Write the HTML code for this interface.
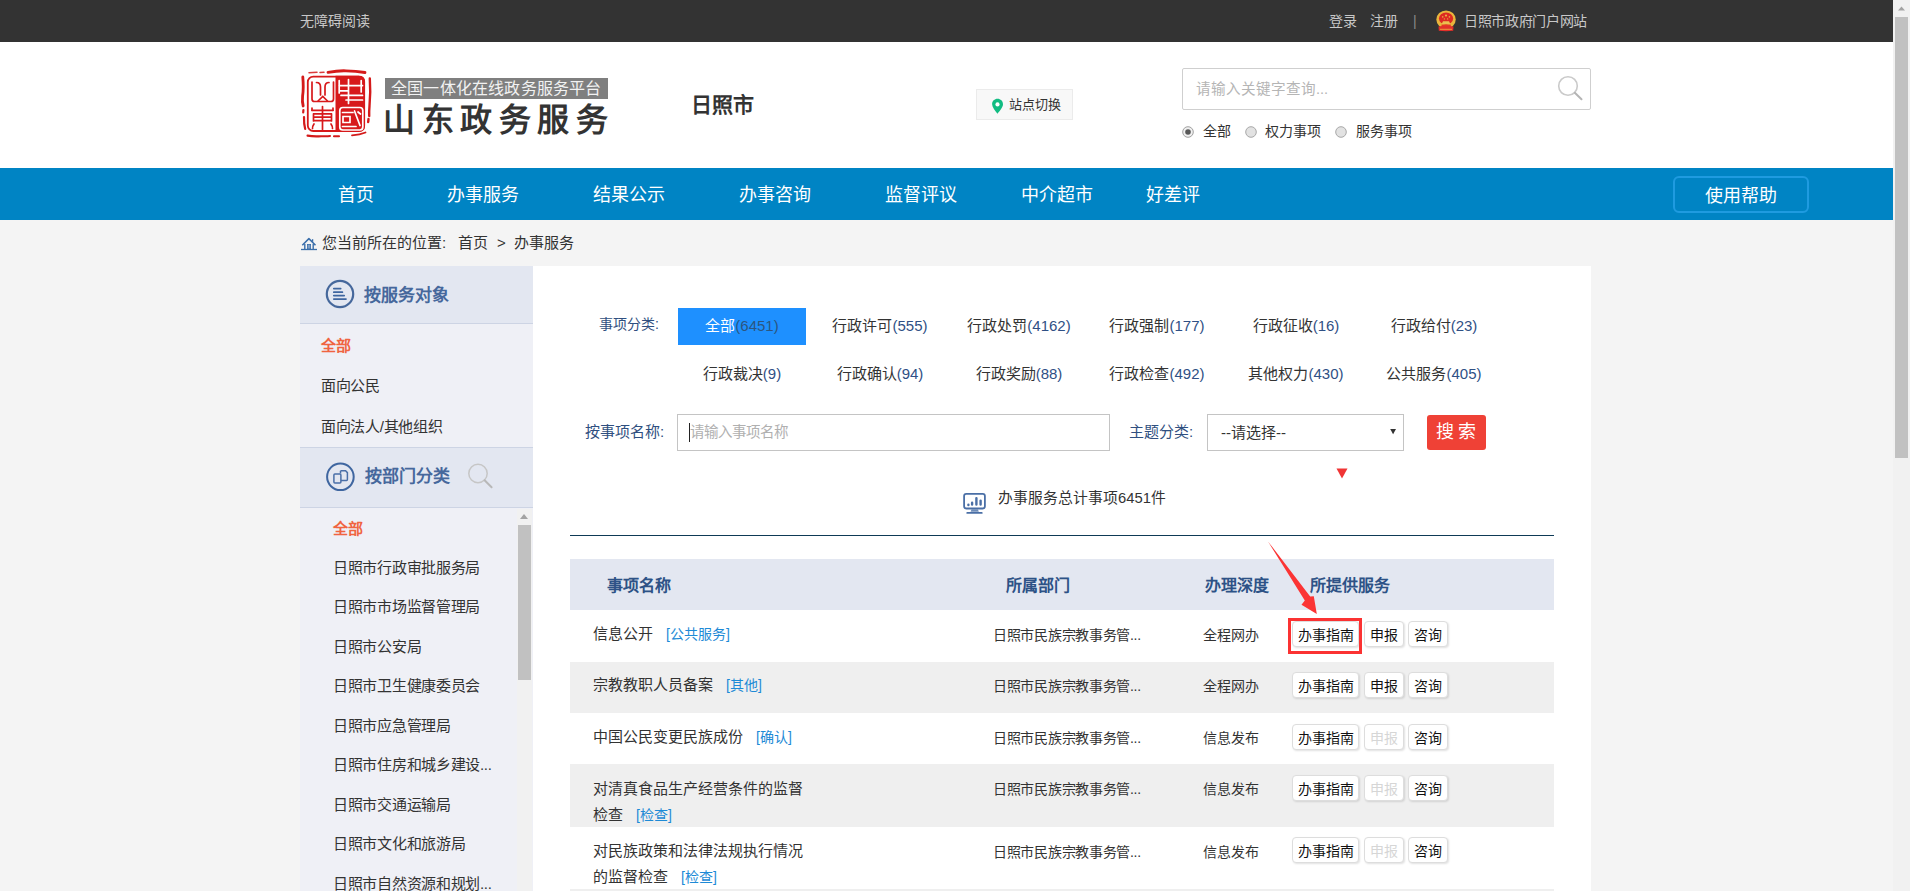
<!DOCTYPE html>
<html lang="zh-CN">
<head>
<meta charset="utf-8">
<title>山东政务服务</title>
<style>
*{margin:0;padding:0;box-sizing:border-box;}
html,body{width:1910px;height:891px;overflow:hidden;}
body{font-family:"Liberation Sans",sans-serif;background:#f4f4f4;position:relative;color:#333;}
.a{position:absolute;white-space:nowrap;}
#top{left:0;top:0;width:1893px;height:42px;background:#333;}
.tt{color:#c8c8c8;font-size:14px;line-height:16px;}
#hdr{left:0;top:42px;width:1893px;height:126px;background:#fff;}
#nav{left:0;top:168px;width:1893px;height:52px;background:#0084c4;}
.ni{color:#fff;font-size:18px;line-height:20px;top:185px;}
#help{left:1673px;top:176px;width:136px;height:37px;border:2px solid #1f9be0;border-radius:6px;color:#fff;font-size:18px;text-align:center;line-height:35px;}
#sb{left:1893px;top:0;width:17px;height:891px;background:#f1f1f1;}
#sbt{left:1895px;top:17px;width:13px;height:441px;background:#c1c1c1;}
#side{left:300px;top:266px;width:233px;height:625px;background:#eff0f6;}
.sh{left:300px;width:233px;background:#e3e7f1;border-bottom:1px solid #cdd4e4;}
.stitle{color:#46689c;font-size:17px;font-weight:bold;line-height:20px;}
.si{font-size:15px;color:#333;line-height:18px;letter-spacing:-0.3px;}
.sel{color:#f06440;font-weight:bold;}
#main{left:533px;top:266px;width:1058px;height:625px;background:#fff;}
.tab{font-size:15px;color:#333;line-height:18px;text-align:center;width:138px;}
.row{left:570px;width:984px;}
.btn{height:26px;border:1px solid #ddd;border-radius:4px;background:#fff;box-shadow:1px 1px 2px rgba(0,0,0,.12);font-size:14px;line-height:26px;text-align:center;color:#111;}
.dis{color:#d6d6d6 !important;}
.bc{top:234px;font-size:15px;line-height:18px;color:#333;}
.c{color:#2f5085;}
.nm{font-size:15px;color:#333;line-height:26px;white-space:normal;width:224px;}
.tag{color:#1d8ad6;font-size:14px;margin-left:13px;}
.dp{font-size:14px;color:#333;line-height:18px;}
.dq{letter-spacing:-0.3px;}
.th{font-size:16px;font-weight:bold;color:#2d5286;line-height:20px;top:576px !important;}
</style>
</head>
<body>
<!-- top bar -->
<div class="a" id="top"></div>
<div class="a tt" style="left:300px;top:13px;">无障碍阅读</div>
<div class="a tt" style="left:1329px;top:13px;">登录</div>
<div class="a tt" style="left:1370px;top:13px;">注册</div>
<div class="a tt" style="left:1413px;top:13px;color:#8a8a8a;">|</div>
<svg class="a" style="left:1432px;top:8px;" width="30" height="26" viewBox="0 0 30 26">
<ellipse cx="14.05" cy="11.6" rx="9.7" ry="9.2" fill="#e9b53c"/>
<ellipse cx="14.05" cy="10.6" rx="7.1" ry="6" fill="#dc2a22"/>
<circle cx="14" cy="7.6" r="1.1" fill="#eab040"/>
<circle cx="10.7" cy="8.9" r="0.8" fill="#e8a540"/><circle cx="17.4" cy="8.9" r="0.8" fill="#e8a540"/>
<circle cx="12.4" cy="10.9" r="0.7" fill="#e8a540"/><circle cx="15.6" cy="10.9" r="0.7" fill="#e8a540"/>
<path d="M11 13.2 H17 L18.3 16 H9.7z" fill="#eac050"/>
<path d="M9.5 16.6 H18.8 V18.8 H9.5z" fill="#e33a28"/>
<path d="M6.5 18.5 Q14 17 21.5 18.5 L21.2 22.8 Q14 23.5 6.8 22.8z" fill="#e2302a"/>
<path d="M8 21.3 H20" stroke="#eaa840" stroke-width="0.9"/>
</svg>
<div class="a tt" style="left:1464px;top:13px;letter-spacing:-0.35px;">日照市政府门户网站</div>

<!-- header -->
<div class="a" id="hdr"></div>
<svg class="a" style="left:298px;top:66px;" width="76" height="76" viewBox="0 0 76 76">
<g fill="none" stroke="#d41a1a" stroke-linecap="round">
<path d="M11 6.8 L19 6.3 M22 6.5 L26 6.2" stroke-width="1.5" opacity=".85"/>
<path d="M30 6.4 Q40 4.5 48 4.8 Q58 5 67 6.5" stroke-width="2.8"/>
<path d="M4.8 11 Q5.8 22 4.6 30 Q4 36 5.2 40" stroke-width="2.8"/>
<path d="M5.4 44 L5.2 46.5 M6 51 Q5.8 58 7.2 63" stroke-width="2.2"/>
<path d="M71.8 12.5 Q72.8 26 71.5 40 Q71 46 71.2 50 M70.5 53 L70.2 56" stroke-width="2.4"/>
<path d="M9.5 69.6 Q16 70.8 23 70.2 Q29 70.5 32 70 M36 70.2 L41 70.3" stroke-width="2.1"/>
<path d="M54 69.3 Q62 68.8 67.5 66.5" stroke-width="1.8"/>
</g>
<rect x="9.8" y="10.6" width="56.4" height="54.4" rx="5.5" fill="#fff" stroke="#d7191b" stroke-width="1.8"/>
<path d="M37.5 9.8 H61 Q67 9.8 67 15.5 V60 Q67 65.8 61 65.8 H37.5z" fill="#d7191b"/>
<g stroke="#d7191b" stroke-width="1.7" fill="none" stroke-linecap="round">
<path d="M14 16 V33 Q14 35.5 16.5 35.5 H33 Q35.5 35.5 35.5 33 V16"/>
<path d="M18.5 16.5 Q22.5 16.5 22.5 21 V29 M31 16.5 Q27 16.5 27 21 V29"/>
<path d="M20 35 L24.8 30.5 L29.5 35"/>
<path d="M14 44.3 H35 M16 47.8 H33 M16 51.2 H33 M16 54.6 H33 M24.5 40.5 V63.5 M15.5 47.8 V55 M33.5 47.8 V55"/>
<path d="M16 58 Q14 61 14.5 62.5 M33 58 Q35 61 34.5 62.5 M14 42 V44.3 M35 42 V44.3"/>
</g>
<g stroke="#fff" stroke-width="1.7" fill="none" stroke-linecap="round">
<path d="M41 19.6 H64.5 M43 29.4 H64.5 M48 34 H64.5 M50.5 13.5 V37.5 M41.2 14.5 V27 M63.2 14.5 V26 M41.2 24.8 H50"/>
<rect x="41.8" y="41.5" width="23" height="22.5" rx="3"/>
<path d="M44.5 46.5 H55 M45 50.5 H52 V56.5 H45z M56.5 45 L62 59.5 M44.5 60.5 H58 M60 46 L62.5 48"/>
</g>
</svg>
<div class="a" style="left:385px;top:78px;width:223px;height:21px;background:#7f7f7f;"></div>
<div class="a" style="left:391px;top:78px;font-size:16px;line-height:21px;color:#f2f2f2;letter-spacing:0.2px;">全国一体化在线政务服务平台</div>
<div class="a" style="left:383px;top:101px;font-size:32px;line-height:38px;color:#333;font-weight:bold;letter-spacing:6.5px;">山东政务服务</div>
<div class="a" style="left:691px;top:92px;font-size:21px;line-height:25px;color:#333;font-weight:bold;">日照市</div>
<div class="a" style="left:976px;top:89px;width:97px;height:31px;background:#f8f8f8;border:1px solid #ebebeb;"></div>
<svg class="a" style="left:992px;top:98px;" width="12" height="16" viewBox="0 0 12 16">
<path d="M5.5 0.7 C2.5 0.7 0.1 3 0.1 6.2 C0.1 9.3 3.2 12.6 5.5 15.7 C7.8 12.6 11 9.3 11 6.2 C11 3 8.5 0.7 5.5 0.7z" fill="#12bc82"/>
<circle cx="5.5" cy="6.4" r="2.1" fill="#fff"/>
</svg>
<div class="a" style="left:1009px;top:97px;font-size:13px;line-height:16px;color:#333;">站点切换</div>
<div class="a" style="left:1182px;top:68px;width:409px;height:42px;border:1px solid #cfcfcf;border-radius:2px;background:#fff;"></div>
<div class="a" style="left:1196px;top:80px;font-size:14.6px;line-height:18px;color:#b5b5b5;">请输入关键字查询...</div>
<svg class="a" style="left:1556px;top:75px;" width="28" height="27" viewBox="0 0 28 27">
<circle cx="12" cy="11" r="9.3" fill="none" stroke="#cacaca" stroke-width="1.6"/>
<path d="M18.8 17.8 L25.5 24.3" stroke="#b5b5b5" stroke-width="2" stroke-linecap="round"/>
</svg>
<!-- radios -->
<svg class="a" style="left:1182px;top:126px;" width="12" height="12" viewBox="0 0 12 12"><circle cx="6" cy="6" r="5.3" fill="#f0f0f0" stroke="#a0a0a0" stroke-width="1"/><circle cx="6" cy="6" r="2.8" fill="#585858"/></svg>
<div class="a" style="left:1203px;top:123px;font-size:14px;line-height:17px;color:#333;">全部</div>
<svg class="a" style="left:1245px;top:126px;" width="12" height="12" viewBox="0 0 12 12"><circle cx="6" cy="6" r="5.3" fill="#e2e2e2" stroke="#a8a8a8" stroke-width="1"/></svg>
<div class="a" style="left:1265px;top:123px;font-size:14px;line-height:17px;color:#333;">权力事项</div>
<svg class="a" style="left:1335px;top:126px;" width="12" height="12" viewBox="0 0 12 12"><circle cx="6" cy="6" r="5.3" fill="#e2e2e2" stroke="#a8a8a8" stroke-width="1"/></svg>
<div class="a" style="left:1356px;top:123px;font-size:14px;line-height:17px;color:#333;">服务事项</div>

<!-- nav -->
<div class="a" id="nav"></div>
<div class="a ni" style="left:338px;">首页</div>
<div class="a ni" style="left:447px;">办事服务</div>
<div class="a ni" style="left:593px;">结果公示</div>
<div class="a ni" style="left:739px;">办事咨询</div>
<div class="a ni" style="left:885px;">监督评议</div>
<div class="a ni" style="left:1021px;">中介超市</div>
<div class="a ni" style="left:1146px;">好差评</div>
<div class="a" id="help"></div><div class="a" style="left:1705px;top:186px;font-size:18px;line-height:20px;color:#fff;">使用帮助</div>

<!-- breadcrumb -->
<svg class="a" style="left:298px;top:232px;" width="24" height="22" viewBox="0 0 24 22">
<path d="M4.3 13.3 L10.9 6.6 L17.5 13.3" fill="none" stroke="#3a6eaa" stroke-width="1.5" stroke-linejoin="round"/>
<path d="M14.6 7.2 V9.8" stroke="#3a6eaa" stroke-width="1.3"/>
<path d="M6.8 12 V17.2 M15.2 12 V17.2" stroke="#3a6eaa" stroke-width="1.4"/>
<rect x="9.4" y="12.4" width="3.2" height="4.6" fill="#7f9fc6" stroke="#3a6eaa" stroke-width="0.8"/>
<path d="M3 17.5 H19" stroke="#3a6eaa" stroke-width="1.3"/>
</svg>
<div class="a bc" style="left:322px;">您当前所在的位置:</div><div class="a bc" style="left:458px;">首页</div><div class="a bc" style="left:497px;">&gt;</div><div class="a bc" style="left:514px;">办事服务</div>

<!-- sidebar -->
<div class="a" id="side"></div>
<div class="a sh" style="top:266px;height:58px;"></div>
<svg class="a" style="left:325px;top:279px;" width="30" height="30" viewBox="0 0 30 30">
<circle cx="15" cy="15" r="13.2" fill="none" stroke="#46689c" stroke-width="2.2"/>
<path d="M8.8 9.6h6.9 M8.8 13.2h8.6 M8.8 16.6h10.4 M8.8 20.1h12.2" stroke="#3f66a0" stroke-width="1.7" stroke-linecap="round"/>
</svg>
<div class="a stitle" style="left:364px;top:286px;">按服务对象</div>
<div class="a si sel" style="left:321px;top:337px;">全部</div>
<div class="a si" style="left:321px;top:377px;">面向公民</div>
<div class="a si" style="left:321px;top:418px;">面向法人/其他组织</div>

<div class="a sh" style="top:447px;height:61px;border-top:1px solid #cdd4e4;"></div>
<svg class="a" style="left:325px;top:462px;" width="31" height="30" viewBox="0 0 31 30">
<circle cx="15.4" cy="14.8" r="13.3" fill="none" stroke="#3f66a0" stroke-width="2"/>
<path d="M15.5 8.8 H20.6 L22.4 10.6 V17.6 Q22.4 18.4 21.6 18.4 H15.5" fill="none" stroke="#4a6fa8" stroke-width="1.5"/>
<rect x="8.9" y="11.9" width="7" height="9.2" rx="1" fill="#e3e7f1" stroke="#4a6fa8" stroke-width="1.5"/>
<path d="M15.5 8.8 V11.5" stroke="#4a6fa8" stroke-width="1.5"/>
</svg>
<div class="a stitle" style="left:365px;top:467px;">按部门分类</div>
<svg class="a" style="left:467px;top:463px;" width="27" height="26" viewBox="0 0 27 26">
<circle cx="11" cy="10.5" r="9.2" fill="none" stroke="#c6c6c6" stroke-width="1.5"/>
<path d="M17.6 17.3 L24.6 24.2" stroke="#b8b8b8" stroke-width="2" stroke-linecap="round"/>
</svg>
<div class="a" style="left:517px;top:509px;width:15px;height:382px;background:#f1f1f1;"></div>
<div class="a" style="left:518px;top:525px;width:13px;height:155px;background:#c1c1c1;"></div>
<svg class="a" style="left:520px;top:514px;" width="8" height="5" viewBox="0 0 8 5"><path d="M0 5 L4 0 L8 5z" fill="#a3a3a3"/></svg>
<div class="a si sel" style="left:333px;top:520px;">全部</div>
<div class="a si" style="left:333px;top:559px;">日照市行政审批服务局</div>
<div class="a si" style="left:333px;top:598px;">日照市市场监督管理局</div>
<div class="a si" style="left:333px;top:638px;">日照市公安局</div>
<div class="a si" style="left:333px;top:677px;">日照市卫生健康委员会</div>
<div class="a si" style="left:333px;top:717px;">日照市应急管理局</div>
<div class="a si" style="left:333px;top:756px;">日照市住房和城乡建设...</div>
<div class="a si" style="left:333px;top:796px;">日照市交通运输局</div>
<div class="a si" style="left:333px;top:835px;">日照市文化和旅游局</div>
<div class="a si" style="left:333px;top:875px;">日照市自然资源和规划...</div>

<!-- main -->
<div class="a" id="main"></div>
<div class="a" style="left:599px;top:316px;font-size:14px;line-height:17px;color:#2f4f80;">事项分类:</div>
<div class="a" style="left:678px;top:308px;width:128px;height:37px;background:#1e90ff;"></div>
<div class="a tab" style="left:673px;top:317px;"><span style="color:#fff">全部</span><span style="color:#2c5680">(6451)</span></div>
<div class="a tab" style="left:811px;top:317px;">行政许可<span class="c">(555)</span></div>
<div class="a tab" style="left:950px;top:317px;">行政处罚<span class="c">(4162)</span></div>
<div class="a tab" style="left:1088px;top:317px;">行政强制<span class="c">(177)</span></div>
<div class="a tab" style="left:1227px;top:317px;">行政征收<span class="c">(16)</span></div>
<div class="a tab" style="left:1365px;top:317px;">行政给付<span class="c">(23)</span></div>
<div class="a tab" style="left:673px;top:365px;">行政裁决<span class="c">(9)</span></div>
<div class="a tab" style="left:811px;top:365px;">行政确认<span class="c">(94)</span></div>
<div class="a tab" style="left:950px;top:365px;">行政奖励<span class="c">(88)</span></div>
<div class="a tab" style="left:1088px;top:365px;">行政检查<span class="c">(492)</span></div>
<div class="a tab" style="left:1227px;top:365px;">其他权力<span class="c">(430)</span></div>
<div class="a tab" style="left:1365px;top:365px;">公共服务<span class="c">(405)</span></div>

<div class="a" style="left:585px;top:423px;font-size:15px;line-height:18px;color:#2f4f80;">按事项名称:</div>
<div class="a" style="left:677px;top:414px;width:433px;height:37px;border:1px solid #c4c4c4;background:#fff;"></div>
<div class="a" style="left:689px;top:423px;width:1px;height:19px;background:#222;"></div>
<div class="a" style="left:690px;top:424px;font-size:14.5px;line-height:17px;color:#b0b0b0;">请输入事项名称</div>
<div class="a" style="left:1129px;top:423px;font-size:15px;line-height:18px;color:#2f4f80;">主题分类:</div>
<div class="a" style="left:1207px;top:414px;width:197px;height:37px;border:1px solid #c4c4c4;background:#fff;"></div>
<div class="a" style="left:1221px;top:424px;font-size:15px;line-height:18px;color:#333;">--请选择--</div>
<svg class="a" style="left:1390px;top:428px;" width="7" height="7" viewBox="0 0 7 7"><path d="M0.2 1 H6 L3.1 6.3z" fill="#333"/></svg>
<div class="a" style="left:1427px;top:415px;width:59px;height:35px;background:#ef4136;border-radius:3px;color:#fff;font-size:18px;line-height:35px;text-align:center;letter-spacing:4px;padding-left:3px;">搜索</div>
<svg class="a" style="left:1336px;top:468px;" width="12" height="11" viewBox="0 0 12 11"><path d="M0.5 0.5 H11.5 L6 10.5z" fill="#f03535"/></svg>

<svg class="a" style="left:962px;top:492px;" width="26" height="24" viewBox="0 0 26 24">
<rect x="2.1" y="1.8" width="20.8" height="14.7" rx="2.2" fill="none" stroke="#4a6fa6" stroke-width="1.8"/>
<path d="M6.4 13 V12.7 M10.1 12.6 V10.7 M14.4 12.6 V6.1 M18.6 12.6 V8.6" stroke="#4a6fa6" stroke-width="2.4" stroke-linecap="round"/>
<path d="M9.5 17.2 H15.9 L16.8 19.8 H8.6z" fill="#6e8cb8"/>
<path d="M5.2 20.9 H19.8" stroke="#4a6fa6" stroke-width="1.7" stroke-linecap="round"/>
</svg>
<div class="a" style="left:998px;top:489px;font-size:14.8px;line-height:18px;color:#333;">办事服务总计事项6451件</div>
<div class="a" style="left:570px;top:535px;width:984px;height:1px;background:#0e3a56;"></div>

<!-- table -->
<div class="a row" style="top:559px;height:51px;background:#e3e7f1;"></div>
<div class="a th" style="left:607px;top:575px;">事项名称</div>
<div class="a th" style="left:1006px;top:575px;">所属部门</div>
<div class="a th" style="left:1205px;top:575px;">办理深度</div>
<div class="a th" style="left:1310px;top:575px;">所提供服务</div>

<div class="a row" style="top:610px;height:52px;background:#fff;"></div>
<div class="a row" style="top:662px;height:51px;background:#efefef;"></div>
<div class="a row" style="top:713px;height:51px;background:#fff;"></div>
<div class="a row" style="top:764px;height:63px;background:#efefef;"></div>
<div class="a row" style="top:827px;height:62px;background:#fff;"></div>
<div class="a row" style="top:889px;height:10px;background:#efefef;"></div>

<div class="a nm" style="left:593px;top:621px;">信息公开<span class="tag">[公共服务]</span></div>
<div class="a nm" style="left:593px;top:672px;">宗教教职人员备案<span class="tag">[其他]</span></div>
<div class="a nm" style="left:593px;top:724px;">中国公民变更民族成份<span class="tag">[确认]</span></div>
<div class="a nm" style="left:593px;top:776px;">对清真食品生产经营条件的监督检查<span class="tag">[检查]</span></div>
<div class="a nm" style="left:593px;top:838px;">对民族政策和法律法规执行情况的监督检查<span class="tag">[检查]</span></div>

<div class="a dp dq" style="left:993px;top:626px;">日照市民族宗教事务管...</div>
<div class="a dp dq" style="left:993px;top:677px;">日照市民族宗教事务管...</div>
<div class="a dp dq" style="left:993px;top:729px;">日照市民族宗教事务管...</div>
<div class="a dp dq" style="left:993px;top:780px;">日照市民族宗教事务管...</div>
<div class="a dp dq" style="left:993px;top:843px;">日照市民族宗教事务管...</div>

<div class="a dp" style="left:1203px;top:626px;">全程网办</div>
<div class="a dp" style="left:1203px;top:677px;">全程网办</div>
<div class="a dp" style="left:1203px;top:729px;">信息发布</div>
<div class="a dp" style="left:1203px;top:780px;">信息发布</div>
<div class="a dp" style="left:1203px;top:843px;">信息发布</div>

<div class="a btn" style="left:1292px;top:621px;width:67px;">办事指南</div>
<div class="a btn" style="left:1364px;top:621px;width:40px;">申报</div>
<div class="a btn" style="left:1408px;top:621px;width:40px;">咨询</div>
<div class="a btn" style="left:1292px;top:672px;width:67px;">办事指南</div>
<div class="a btn" style="left:1364px;top:672px;width:40px;">申报</div>
<div class="a btn" style="left:1408px;top:672px;width:40px;">咨询</div>
<div class="a btn" style="left:1292px;top:724px;width:67px;">办事指南</div>
<div class="a btn dis" style="left:1364px;top:724px;width:40px;">申报</div>
<div class="a btn" style="left:1408px;top:724px;width:40px;">咨询</div>
<div class="a btn" style="left:1292px;top:775px;width:67px;">办事指南</div>
<div class="a btn dis" style="left:1364px;top:775px;width:40px;">申报</div>
<div class="a btn" style="left:1408px;top:775px;width:40px;">咨询</div>
<div class="a btn" style="left:1292px;top:837px;width:67px;">办事指南</div>
<div class="a btn dis" style="left:1364px;top:837px;width:40px;">申报</div>
<div class="a btn" style="left:1408px;top:837px;width:40px;">咨询</div>

<!-- annotation -->
<div class="a" style="left:1288px;top:618px;width:74px;height:36px;border:3px solid #fb3232;"></div>
<svg class="a" style="left:1260px;top:535px;" width="64" height="85" viewBox="1260 535 64 85">
<path d="M1268 541.5 L1310.2 596.6 L1313.8 596.2 L1316.8 614 L1301.5 604.7 L1304.8 600.6 Z" fill="#fb3434"/>
</svg>

<!-- page scrollbar -->
<div class="a" id="sb"></div>
<div class="a" id="sbt"></div>
<svg class="a" style="left:1898px;top:6px;" width="7" height="5" viewBox="0 0 7 5"><path d="M0 4.5 L3.5 0.5 L7 4.5z" fill="#a3a3a3"/></svg>
</body>
</html>
